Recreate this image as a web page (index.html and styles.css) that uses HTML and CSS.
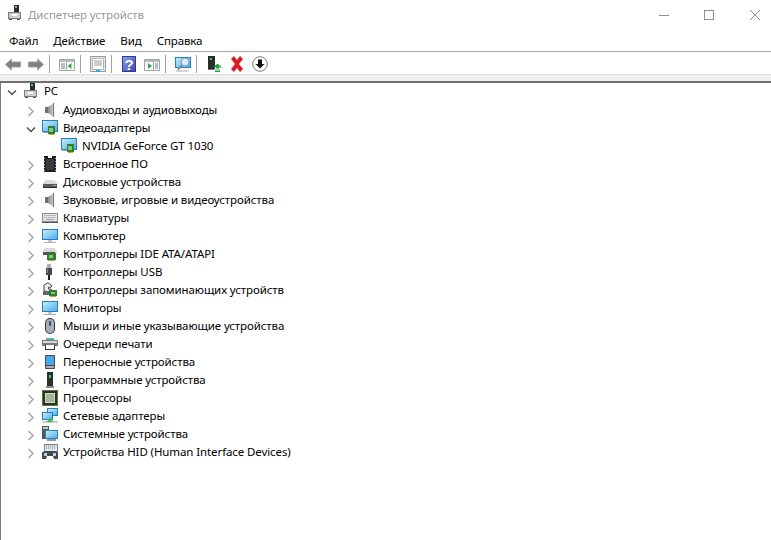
FILE: index.html
```html
<!DOCTYPE html>
<html lang="ru">
<head>
<meta charset="utf-8">
<title>Диспетчер устройств</title>
<link rel="stylesheet" href="styles.css">
</head>
<body>
<svg class="defs" width="0" height="0">
  <defs>
    <linearGradient id="screen" x1="0" y1="0" x2="1" y2="1"><stop offset="0" stop-color="#c4ebfc"/><stop offset="1" stop-color="#4fb0ea"/></linearGradient>
    <linearGradient id="helpfill" x1="0" y1="0" x2="1" y2="1"><stop offset="0" stop-color="#8d9be0"/><stop offset="1" stop-color="#3a4cb4"/></linearGradient>
    <linearGradient id="cone" x1="0" y1="0" x2="1" y2="0"><stop offset="0" stop-color="#8c8c8c"/><stop offset="1" stop-color="#d6d6d6"/></linearGradient>
    <symbol id="pc" viewBox="0 0 16 16"><rect x="6" y="0" width="5" height="8" fill="#2b2b2b"/><rect x="7" y="1" width="2" height="2" fill="#3fd65a"/><path d="M0 7h13v7H0z" fill="#7c7c7c"/><path d="M1 8h11v5H1z" fill="#cfcfcf"/><rect x="4" y="9" width="5" height="2" fill="#fff"/><rect x="1" y="14" width="3" height="1" fill="#555"/><rect x="9" y="14" width="3" height="1" fill="#555"/></symbol>
    <symbol id="speaker" viewBox="0 0 16 16"><path d="M3 5h3v6H3z" fill="#6f6f6f"/><path d="M6 5l6-4v14l-6-4z" fill="url(#cone)"/><path d="M11 1h1v14h-1z" fill="#777"/></symbol>
    <symbol id="card" viewBox="0 0 16 16"><rect x="0" y="0" width="16" height="12" fill="#2a7fc0"/><rect x="1" y="1" width="14" height="10" fill="url(#screen)"/><rect x="6" y="6" width="7" height="8" fill="#2d7f38"/><rect x="7" y="8" width="4" height="4" fill="#85c96f"/><rect x="7" y="14" width="5" height="1" fill="#c9a227"/><rect x="1" y="12" width="5" height="1" fill="#a8a8a8"/></symbol>
    <symbol id="chip" viewBox="0 0 16 16"><path d="M2 0h12v16H2z" fill="#1f1f1f"/><path d="M6 0h4v2H6z" fill="#fff"/><path d="M2 2h1v1H2zM2 5h1v1H2zM2 8h1v1H2zM2 11h1v1H2zM2 14h1v1H2zM13 2h1v1h-1zM13 5h1v1h-1zM13 8h1v1h-1zM13 11h1v1h-1zM13 14h1v1h-1z" fill="#bbb"/><path d="M4 3h8v11H4z" fill="#3a3a3a"/></symbol>
    <symbol id="disk" viewBox="0 0 16 16"><path d="M4 6h8l3 3v2H1V9z" fill="#d8d8d8"/><path d="M1 10h14v4H1z" fill="#5a5a5a"/><rect x="11" y="11" width="3" height="1" fill="#5fd06a"/><path d="M1 13h14v1H1z" fill="#2a2a2a"/></symbol>
    <symbol id="keyboard" viewBox="0 0 16 16"><path d="M0 3h16v9H0z" fill="#8a8f96"/><path d="M1 4h14v7H1z" fill="#e2e5e8"/><path d="M2 5h12v1H2zM2 7h12v1H2zM4 9h8v1H4z" fill="#a0a6ad"/><path d="M3.500 5v3M5.500 5v3M7.500 5v3M9.500 5v3M11.500 5v3M13.500 5v3" stroke="#e2e5e8" stroke-width=".6"/><path d="M0 12h16v1H0z" fill="#555"/></symbol>
    <symbol id="monitor" viewBox="0 0 16 16"><rect x="0" y="1" width="16" height="11" fill="#2a7fc0"/><rect x="1" y="2" width="14" height="9" fill="url(#screen)"/><rect x="6" y="12" width="4" height="2" fill="#c4c4c4"/><rect x="2" y="14" width="12" height="1" fill="#b0b0b0"/></symbol>
    <symbol id="ide" viewBox="0 0 16 16"><path d="M3 2h9l3 3v2H1V5z" fill="#d8d8d8"/><path d="M1 6h12v3H1z" fill="#555"/><rect x="5" y="7" width="9" height="7" fill="#2d7f38"/><rect x="7" y="9" width="4" height="3" fill="#85c96f"/><rect x="6" y="14" width="7" height="1" fill="#c9a227"/></symbol>
    <symbol id="usb" viewBox="0 0 16 16"><path d="M5 0h4v4H5z" fill="#b0b0b0"/><path d="M4 4h6v7H4z" fill="#4a4a4a"/><path d="M6 11h2v5H6z" fill="#222"/><path d="M5 5h1v4H5z" fill="#8a8a8a"/></symbol>
    <symbol id="storage" viewBox="0 0 16 16"><path d="M6 .700l4 3-1 1.500H6.500V7H9l1 1.500-4 2-4-2V3z" fill="#eee" stroke="#444" stroke-width="1"/><path d="M1 9h7v4H1z" fill="#666"/><rect x="7" y="8" width="8" height="6" fill="#2d7f38"/><rect x="9" y="10" width="4" height="2" fill="#85c96f"/><rect x="8" y="14" width="6" height="1" fill="#c9a227"/></symbol>
    <symbol id="mouse" viewBox="0 0 16 16"><rect x="3" y="0" width="10" height="16" rx="5" fill="#2f3a45"/><rect x="4" y="1" width="8" height="14" rx="4" fill="#a4aeb8"/><rect x="7" y="3" width="2" height="5" rx="1" fill="#3e4a55"/></symbol>
    <symbol id="printer" viewBox="0 0 16 16"><path d="M4 2h8v2H4z" fill="#4fb6a8"/><path d="M0 4h16v6H0z" fill="#7a7a7a"/><path d="M1 5h14v2H1z" fill="#d8d8d8"/><path d="M3 9h10v5H3z" fill="#fff"/><path d="M3 13h10v1H3zM3 9h1v5H3zM12 9h1v5h-1z" fill="#333"/></symbol>
    <symbol id="portable" viewBox="0 0 16 16"><rect x="3" y="1" width="10" height="14" rx="1" fill="#4a4a4a"/><rect x="4" y="2" width="8" height="9" fill="#45a8e8"/><rect x="4" y="12" width="8" height="2" fill="#b0b0b0"/></symbol>
    <symbol id="software" viewBox="0 0 16 16"><rect x="5" y="0" width="6" height="14" fill="#2c2c2c"/><rect x="7" y="3" width="2" height="3" fill="#3fd65a"/><rect x="4" y="14" width="8" height="2" fill="#8a8a8a"/></symbol>
    <symbol id="cpu" viewBox="0 0 16 16"><rect x="0" y="0" width="16" height="16" fill="#5f7a34"/><rect x="1" y="1" width="14" height="14" fill="#28321e"/><rect x="3" y="3" width="10" height="10" fill="#d2d8cc"/><rect x="4" y="4" width="8" height="8" fill="#a9b2a0"/></symbol>
    <symbol id="network" viewBox="0 0 16 16"><rect x="5" y="0" width="11" height="8" fill="#2a7fc0"/><rect x="6" y="1" width="9" height="6" fill="url(#screen)"/><rect x="0" y="4" width="11" height="8" fill="#2a7fc0"/><rect x="1" y="5" width="9" height="6" fill="url(#screen)"/><rect x="0" y="13" width="16" height="2" fill="#cfcfcf"/><path d="M8 10l3.500 4h-7z" fill="#4cbb4c"/></symbol>
    <symbol id="system" viewBox="0 0 16 16"><rect x="0" y="0" width="7" height="13" fill="#555"/><rect x="1" y="1" width="5" height="2" fill="#ccc"/><rect x="3" y="4" width="13" height="9" fill="#2a7fc0"/><rect x="4" y="5" width="11" height="7" fill="url(#screen)"/><rect x="5" y="13" width="9" height="2" fill="#999"/></symbol>
    <symbol id="hid" viewBox="0 0 16 16"><path d="M2 0h14v8H2z" fill="#7f8790"/><path d="M3 1h12v6H3z" fill="#e2e5e8"/><path d="M4 2h10M4 4h10" stroke="#7a818a" stroke-dasharray="1 1"/><path d="M0 9c0-1 1-2 4-2h8c3 0 4 1 4 2v6h-4l-1-3H5l-1 3H0z" fill="#3f4a55"/><path d="M2 9h3v3H2zM11 9h3v3h-3z" fill="#c9ced4"/></symbol>
    <symbol id="back" viewBox="0 0 16 16"><path d="M.5 8.500L6.500 3v3h9v5h-9v3z" fill="#808080" stroke="#a0a0a0"/></symbol>
    <symbol id="forward" viewBox="0 0 16 16"><path d="M15.500 8.500L9.500 3v3h-9v5h9v3z" fill="#808080" stroke="#a0a0a0"/></symbol>
    <symbol id="win-left" viewBox="0 0 16 16"><path d="M.5 3.500h15v11H.5z" fill="#fff" stroke="#a0a4aa"/><path d="M1 4h14v2H1z" fill="#b8bcc2"/><path d="M7.500 6v8" stroke="#a0a4aa"/><path d="M2 8h4M2 10h4M2 12h4" stroke="#5c7f9a"/><path d="M12.500 7v6l-4-3z" fill="#35a83f"/></symbol>
    <symbol id="win-right" viewBox="0 0 16 16"><path d="M.5 3.500h15v11H.5z" fill="#fff" stroke="#a0a4aa"/><path d="M1 4h14v2H1z" fill="#b8bcc2"/><path d="M9.500 6v8" stroke="#a0a4aa"/><path d="M11 8h3M11 10h3M11 12h3" stroke="#5c7f9a"/><path d="M4 7v6l4-3z" fill="#35a83f"/></symbol>
    <symbol id="props" viewBox="0 0 16 16"><path d="M.5.500h15v15H.5z" fill="#e8e8e8" stroke="#9a9a9a"/><path d="M2.500 2.500h11v11h-11z" fill="#fff" stroke="#b5b5b5"/><path d="M4 5h8M4 7h8M4 9h8" stroke="#9a9a9a"/><path d="M6 14h4v2H6z" fill="#35a5e8"/></symbol>
    <symbol id="help" viewBox="0 0 14 16"><rect width="14" height="16" fill="#2b3a9e"/><rect x="1" y="1" width="12" height="14" fill="url(#helpfill)"/><text x="7" y="13.500" text-anchor="middle" class="help-mark">?</text></symbol>
    <symbol id="scan" viewBox="0 0 16 16"><rect x="0" y="1" width="16" height="11" fill="#2a7fc0"/><rect x="1" y="2" width="14" height="9" fill="url(#screen)"/><circle cx="10" cy="6" r="4" fill="#d6eefa" stroke="#7f9aaa"/><path d="M7 9l-4 5" stroke="#808080" stroke-width="1.500"/><path d="M1 15h13" stroke="#b0b0b0"/></symbol>
    <symbol id="add" viewBox="0 0 16 16"><rect x="2" y="0" width="7" height="13" fill="#2c2c2c"/><rect x="4" y="2" width="2" height="2" fill="#3fd65a"/><rect x="2" y="13" width="6" height="1" fill="#777"/><path d="M11.500 7.500l4.500 4h-3v1h-3v-1H7z" fill="#22a83a"/><path d="M9 14h5M9 15.500h5" stroke="#22a83a"/></symbol>
    <symbol id="remove" viewBox="0 0 16 16"><path d="M2 3l3-3 3 4 3-4 3 3-4 5 4 5-3 3-3-4-3 4-3-3 4-5z" fill="#d81e1e"/></symbol>
    <symbol id="download" viewBox="0 0 16 16"><circle cx="8" cy="8" r="7.300" fill="#fff" stroke="#777"/><path d="M6 3.500h4V8h2.500L8 12.500 3.500 8H6z" fill="#111"/></symbol>
    <symbol id="chev-right" viewBox="0 0 16 16"><path d="M7.500 5l4.500 4.500L7.500 14" fill="none" stroke="#a6a6a6" stroke-width="1.500"/></symbol>
    <symbol id="chev-down" viewBox="0 0 16 16"><path d="M6 7.500l4 4 4-4" fill="none" stroke="#505050" stroke-width="1.500"/></symbol>
  </defs>
</svg>
<div class="window">
  <header class="titlebar">
    <svg class="icon app-icon"><use href="#pc"/></svg>
    <span class="title">Диспетчер устройств</span>
    <div class="controls">
      <span class="ctrl-min"></span>
      <span class="ctrl-max"></span>
      <svg class="ctrl-close" viewBox="0 0 10 10"><path d="M0 0l10 10M10 0L0 10" stroke="#8f8f8f"/></svg>
    </div>
  </header>
  <nav class="menu">
    <span class="menu-item">Файл</span>
    <span class="menu-item">Действие</span>
    <span class="menu-item">Вид</span>
    <span class="menu-item">Справка</span>
  </nav>
  <div class="toolbar">
    <span class="tool"><svg class="icon"><use href="#back"/></svg></span>
    <span class="tool"><svg class="icon"><use href="#forward"/></svg></span>
    <span class="sep"></span>
    <span class="tool"><svg class="icon"><use href="#win-left"/></svg></span>
    <span class="sep"></span>
    <span class="tool"><svg class="icon"><use href="#props"/></svg></span>
    <span class="sep"></span>
    <span class="tool"><svg class="icon"><use href="#help"/></svg></span>
    <span class="tool"><svg class="icon"><use href="#win-right"/></svg></span>
    <span class="sep"></span>
    <span class="tool"><svg class="icon"><use href="#scan"/></svg></span>
    <span class="sep"></span>
    <span class="tool"><svg class="icon"><use href="#add"/></svg></span>
    <span class="tool"><svg class="icon"><use href="#remove"/></svg></span>
    <span class="tool"><svg class="icon"><use href="#download"/></svg></span>
  </div>
  <div class="strip"></div>
  <main class="tree">
    <div class="row root"><svg class="chev"><use href="#chev-down"/></svg><svg class="icon"><use href="#pc"/></svg><span class="label l-root">PC</span></div>
    <div class="row"><svg class="chev"><use href="#chev-right"/></svg><svg class="icon"><use href="#speaker"/></svg><span class="label">Аудиовходы и аудиовыходы</span></div>
    <div class="row"><svg class="chev"><use href="#chev-down"/></svg><svg class="icon"><use href="#card"/></svg><span class="label">Видеоадаптеры</span></div>
    <div class="row child"><svg class="icon"><use href="#card"/></svg><span class="label">NVIDIA GeForce GT 1030</span></div>
    <div class="row"><svg class="chev"><use href="#chev-right"/></svg><svg class="icon"><use href="#chip"/></svg><span class="label">Встроенное ПО</span></div>
    <div class="row"><svg class="chev"><use href="#chev-right"/></svg><svg class="icon"><use href="#disk"/></svg><span class="label">Дисковые устройства</span></div>
    <div class="row"><svg class="chev"><use href="#chev-right"/></svg><svg class="icon"><use href="#speaker"/></svg><span class="label">Звуковые, игровые и видеоустройства</span></div>
    <div class="row"><svg class="chev"><use href="#chev-right"/></svg><svg class="icon"><use href="#keyboard"/></svg><span class="label">Клавиатуры</span></div>
    <div class="row"><svg class="chev"><use href="#chev-right"/></svg><svg class="icon"><use href="#monitor"/></svg><span class="label">Компьютер</span></div>
    <div class="row"><svg class="chev"><use href="#chev-right"/></svg><svg class="icon"><use href="#ide"/></svg><span class="label">Контроллеры IDE ATA/ATAPI</span></div>
    <div class="row"><svg class="chev"><use href="#chev-right"/></svg><svg class="icon"><use href="#usb"/></svg><span class="label">Контроллеры USB</span></div>
    <div class="row"><svg class="chev"><use href="#chev-right"/></svg><svg class="icon"><use href="#storage"/></svg><span class="label">Контроллеры запоминающих устройств</span></div>
    <div class="row"><svg class="chev"><use href="#chev-right"/></svg><svg class="icon"><use href="#monitor"/></svg><span class="label">Мониторы</span></div>
    <div class="row"><svg class="chev"><use href="#chev-right"/></svg><svg class="icon"><use href="#mouse"/></svg><span class="label">Мыши и иные указывающие устройства</span></div>
    <div class="row"><svg class="chev"><use href="#chev-right"/></svg><svg class="icon"><use href="#printer"/></svg><span class="label">Очереди печати</span></div>
    <div class="row"><svg class="chev"><use href="#chev-right"/></svg><svg class="icon"><use href="#portable"/></svg><span class="label">Переносные устройства</span></div>
    <div class="row"><svg class="chev"><use href="#chev-right"/></svg><svg class="icon"><use href="#software"/></svg><span class="label">Программные устройства</span></div>
    <div class="row"><svg class="chev"><use href="#chev-right"/></svg><svg class="icon"><use href="#cpu"/></svg><span class="label">Процессоры</span></div>
    <div class="row"><svg class="chev"><use href="#chev-right"/></svg><svg class="icon"><use href="#network"/></svg><span class="label">Сетевые адаптеры</span></div>
    <div class="row"><svg class="chev"><use href="#chev-right"/></svg><svg class="icon"><use href="#system"/></svg><span class="label">Системные устройства</span></div>
    <div class="row"><svg class="chev"><use href="#chev-right"/></svg><svg class="icon"><use href="#hid"/></svg><span class="label">Устройства HID (Human Interface Devices)</span></div>
  </main>
</div>
</body>
</html>
```
FILE: styles.css
```css
html, body {
  margin: 0;
  padding: 0;
  height: 100%;
  background: #fff;
  overflow: hidden;
}
.defs {
  position: absolute;
  width: 0;
  height: 0;
}
.window {
  height: 540px;
  display: flex;
  flex-direction: column;
  font: 11.5px/18px "Noto Sans", "Open Sans", sans-serif;
  letter-spacing: -0.1px;
  color: #000;
}
.icon {
  width: 16px;
  height: 16px;
  flex: none;
  display: block;
}
.titlebar {
  height: 30px;
  display: flex;
  align-items: center;
  padding: 0 11px 0 8px;
  flex: none;
}
.app-icon {
  margin-bottom: 4px;
}
.title {
  margin-left: 4px;
  color: #999;
}
.controls {
  margin-left: auto;
  display: flex;
  align-items: center;
}
.ctrl-min {
  width: 10px;
  height: 1px;
  background: #8f8f8f;
  margin-right: 35px;
}
.ctrl-max {
  width: 10px;
  height: 10px;
  border: 1px solid #8f8f8f;
  box-sizing: border-box;
  margin-right: 36px;
}
.ctrl-close {
  width: 10px;
  height: 10px;
  display: block;
}
.menu {
  height: 21px;
  display: flex;
  align-items: center;
  gap: 15px;
  padding-left: 9px;
  border-bottom: 1px solid #a9a9b0;
  flex: none;
}
.toolbar {
  box-sizing: border-box;
  height: 22px;
  display: flex;
  align-items: center;
  padding: 2px 0 0 1px;
  flex: none;
}
.tool {
  width: 23px;
  display: flex;
  justify-content: center;
}
.sep {
  width: 1px;
  height: 18px;
  background: #a0a0a0;
  margin: 0 5px 0 2px;
}
.strip {
  height: 6px;
  flex: none;
  background: #f0f0f0;
  border-top: 1px solid #dcdcdc;
  border-bottom: 2px solid #6e6e6e;
}
.tree {
  flex: 1;
  border-left: 1px solid #7a7a7a;
}
.row {
  height: 18px;
  display: flex;
  align-items: center;
  padding-left: 20px;
  white-space: nowrap;
}
.chev {
  width: 16px;
  height: 16px;
  flex: none;
  margin-right: 5px;
}
.label {
  margin-left: 5px;
}
.root {
  box-sizing: border-box;
  padding-left: 1px;
  padding-bottom: 2px;
}
.root .chev {
  margin-right: 6px;
}
.l-root {
  margin-left: 4px;
}
.child {
  padding-left: 60px;
}
.help-mark {
  fill: #fff;
  font: bold 15px "Liberation Sans", sans-serif;
}
```
